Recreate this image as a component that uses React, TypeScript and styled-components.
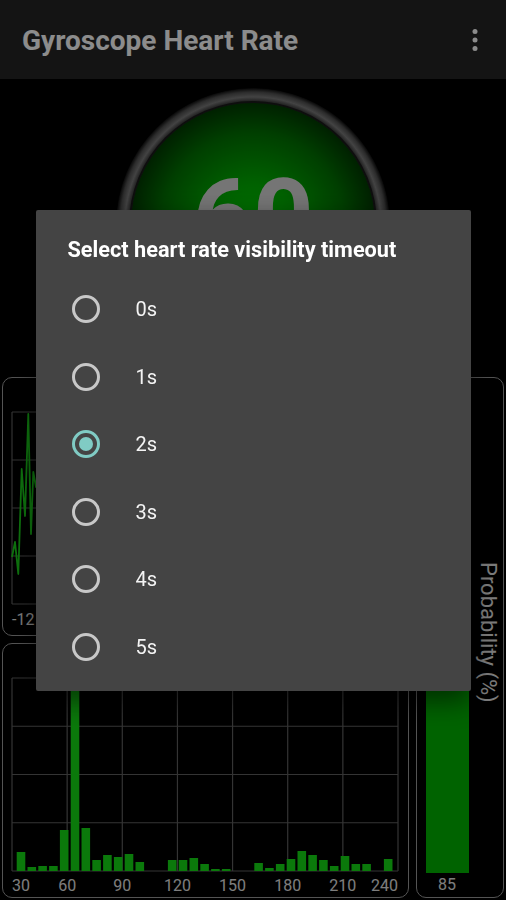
import React from "react";
import styled, { createGlobalStyle } from "styled-components";

const GlobalStyle = createGlobalStyle`
  html, body { margin: 0; padding: 0; background: #000; }
  body { font-family: Roboto, "Noto Sans", "Liberation Sans", sans-serif; }
  *, *::before, *::after { box-sizing: border-box; }
`;

const Screen = styled.div`
  position: relative;
  width: 506px;
  height: 900px;
  background: #000;
  display: flex;
  flex-direction: column;
  overflow: hidden;
`;

const AppBar = styled.header`
  height: 79px;
  flex: none;
  background: #252525;
  display: flex;
  align-items: center;
  justify-content: space-between;
  padding: 0 19px 0 22px;
`;

const AppTitle = styled.h1`
  margin: 0;
  font-size: 28px;
  font-weight: 700;
  line-height: 32px;
  padding-top: 2px;
  color: #ffffff;
`;

const MenuButton = styled.button`
  width: 24px;
  height: 30px;
  padding: 0;
  border: 0;
  background: transparent;
  display: flex;
  align-items: center;
  justify-content: center;
`;

const GaugeRow = styled.div`
  margin-top: 9px;
  display: flex;
  justify-content: center;
`;

const Bezel = styled.div`
  width: 274px;
  height: 274px;
  border-radius: 50%;
  display: flex;
  align-items: center;
  justify-content: center;
  background: radial-gradient(
    circle closest-side,
    #101010 0,
    #101010 88%,
    #2c2c2c 89.5%,
    #7a7a7a 93.5%,
    #505050 97%,
    #0a0a0a 100%
  );
`;

const Face = styled.div`
  width: 244px;
  height: 244px;
  border-radius: 50%;
  display: flex;
  align-items: center;
  justify-content: center;
  background: radial-gradient(
    circle closest-side,
    #00d000 0%,
    #00b000 35%,
    #007400 75%,
    #003c00 100%
  );
  box-shadow: 0 0 0 2px #1a1a1a;
`;

const Reading = styled.div`
  font-size: 106px;
  font-weight: 700;
  line-height: 1;
  color: #d6d6d6;
  margin-bottom: 14px;
`;

const Panels = styled.main`
  margin-top: 15px;
  padding: 0 2px;
  display: grid;
  grid-template-columns: 407px 88px;
  grid-template-rows: 259px 255px;
  gap: 7px;
`;

const Card = styled.section`
  border: 1.5px solid #9a9a9a;
  border-radius: 10px;
  padding: 33.5px 9.5px 0 8.5px;
  overflow: hidden;
`;

const ChartSvg = styled.svg`
  display: block;
  font-family: Roboto, "Noto Sans", sans-serif;
  font-size: 16px;
  overflow: visible;
`;

const ProbCard = styled(Card)`
  grid-column: 2;
  grid-row: 1 / span 2;
  padding: 33.5px 2.5px 0 8.5px;
  display: grid;
  grid-template-columns: 43px 24px;
  column-gap: 7px;
`;

const BarColumn = styled.div`
  display: flex;
  flex-direction: column;
`;

const BarTrack = styled.div`
  flex: 1;
  display: flex;
  align-items: flex-end;
`;

const Bar = styled.div`
  width: 100%;
  background: #00b400;
`;

const BarValue = styled.div`
  height: 24.5px;
  display: flex;
  align-items: center;
  justify-content: center;
  font-size: 16px;
  color: #e4e4e4;
`;

const AxisTitle = styled.div`
  align-self: center;
  writing-mode: vertical-rl;
  font-size: 22px;
  line-height: 24px;
  color: #e4e4e4;
  white-space: nowrap;
  margin-bottom: 44px;
`;

const Scrim = styled.div`
  position: fixed;
  inset: 0;
  width: 506px;
  height: 900px;
  background: rgba(0, 0, 0, 0.45);
  display: flex;
  align-items: center;
  justify-content: center;
`;

const Dialog = styled.div`
  width: 435px;
  background: #444444;
  border-radius: 2px;
  box-shadow: 0 10px 28px rgba(0, 0, 0, 0.55);
  padding: 28px 0 10px;
`;

const DialogTitle = styled.h2`
  margin: 0 0 14px;
  padding: 0 32px;
  font-size: 21.7px;
  font-weight: 700;
  line-height: 24px;
  color: #ffffff;
`;

const OptionList = styled.div`
  display: flex;
  flex-direction: column;
`;

const Option = styled.div`
  height: 67.5px;
  display: flex;
  align-items: center;
  gap: 36px;
  padding-left: 36px;
  font-size: 20px;
  color: #f4f4f4;
`;

const Radio = styled.span<{ $checked: boolean }>`
  flex: none;
  width: 28px;
  height: 28px;
  border-radius: 50%;
  border: 3px solid ${(p) => (p.$checked ? "#80cbc4" : "#c8c8c8")};
  display: flex;
  align-items: center;
  justify-content: center;
  &::after {
    content: "";
    display: ${(p) => (p.$checked ? "block" : "none")};
    width: 14px;
    height: 14px;
    border-radius: 50%;
    background: #80cbc4;
  }
`;

const PLOT_W = 386;
const GRID = "#606060";
const LABEL = "#e4e4e4";

const linePoints = (() => {
  const pts: [number, number][] = [
    [0, 145], [3, 130], [6.3, 162], [9.7, 57], [13, 104], [16.3, 2],
    [19, 122], [21.3, 60], [24, 75],
  ];
  for (let x = 27; x <= PLOT_W; x += 3.2) {
    const y = 96 + Math.sin(x * 0.37) * 45 + Math.sin(x * 0.11 + 1) * 30;
    pts.push([x, Math.max(4, Math.min(188, y))]);
  }
  return pts.map((p) => `${p[0].toFixed(1)},${p[1].toFixed(1)}`).join(" ");
})();

const histogram = [
  19, 4, 5, 5, 41, 193, 43, 11, 16, 14, 17, 9, 0, 0, 11, 11, 13, 7, 2, 2,
  0, 0, 8, 3, 7, 12, 20, 16, 11, 5, 15, 7, 7, 0, 12,
];

function Grid({ h, rows }: { h: number; rows: number }) {
  const cols = 7;
  const lines = [];
  for (let i = 0; i <= rows; i++) {
    const y = (h / rows) * i;
    lines.push(<line key={`h${i}`} x1={0} x2={PLOT_W} y1={y} y2={y} stroke={GRID} strokeWidth={1.2} />);
  }
  for (let i = 0; i <= cols; i++) {
    const x = (PLOT_W / cols) * i;
    lines.push(<line key={`v${i}`} x1={x} x2={x} y1={0} y2={h} stroke={GRID} strokeWidth={1.2} />);
  }
  return <g>{lines}</g>;
}

function AxisLabels({ labels, y }: { labels: string[]; y: number }) {
  const n = labels.length - 1;
  return (
    <g fill={LABEL}>
      {labels.map((l, i) => (
        <text
          key={l}
          x={(PLOT_W / n) * i}
          y={y}
          textAnchor={i === 0 ? "start" : i === n ? "end" : "middle"}
        >
          {l}
        </text>
      ))}
    </g>
  );
}

function MoreIcon() {
  return (
    <svg width="10" height="26" viewBox="0 0 10 26">
      <circle cx="5" cy="4.5" r="2.5" fill="#fff" />
      <circle cx="5" cy="13" r="2.5" fill="#fff" />
      <circle cx="5" cy="21.5" r="2.5" fill="#fff" />
    </svg>
  );
}

const options = ["0s", "1s", "2s", "3s", "4s", "5s"];

export default function App() {
  return (
    <>
      <GlobalStyle />
      <Screen>
        <AppBar>
          <AppTitle>Gyroscope Heart Rate</AppTitle>
          <MenuButton aria-label="More options">
            <MoreIcon />
          </MenuButton>
        </AppBar>

        <GaugeRow>
          <Bezel>
            <Face>
              <Reading>60</Reading>
            </Face>
          </Bezel>
        </GaugeRow>

        <Panels>
          <Card>
            <ChartSvg width={PLOT_W} height={222}>
              <Grid h={192} rows={4} />
              <polyline points={linePoints} fill="none" stroke="#1ad21a" strokeWidth={1.8} strokeLinejoin="round" />
              <AxisLabels labels={["-12", "-10", "-8", "-6", "-4", "-2", "0", "2"]} y={213} />
            </ChartSvg>
          </Card>

          <Card>
            <ChartSvg width={PLOT_W} height={218}>
              <Grid h={193} rows={4} />
              {histogram.map((v, i) => (
                <rect key={i} x={4.7 + i * 10.8} y={193 - v} width={8.6} height={v} fill="#14dc14" />
              ))}
              <AxisLabels labels={["30", "60", "90", "120", "150", "180", "210", "240"]} y={212.5} />
            </ChartSvg>
          </Card>

          <ProbCard>
            <BarColumn>
              <BarTrack>
                <Bar style={{ height: "85%" }} />
              </BarTrack>
              <BarValue>85</BarValue>
            </BarColumn>
            <AxisTitle>Probability (%)</AxisTitle>
          </ProbCard>
        </Panels>

        <Scrim>
          <Dialog role="dialog">
            <DialogTitle>Select heart rate visibility timeout</DialogTitle>
            <OptionList>
              {options.map((o) => (
                <Option key={o}>
                  <Radio $checked={o === "2s"} />
                  {o}
                </Option>
              ))}
            </OptionList>
          </Dialog>
        </Scrim>
      </Screen>
    </>
  );
}
